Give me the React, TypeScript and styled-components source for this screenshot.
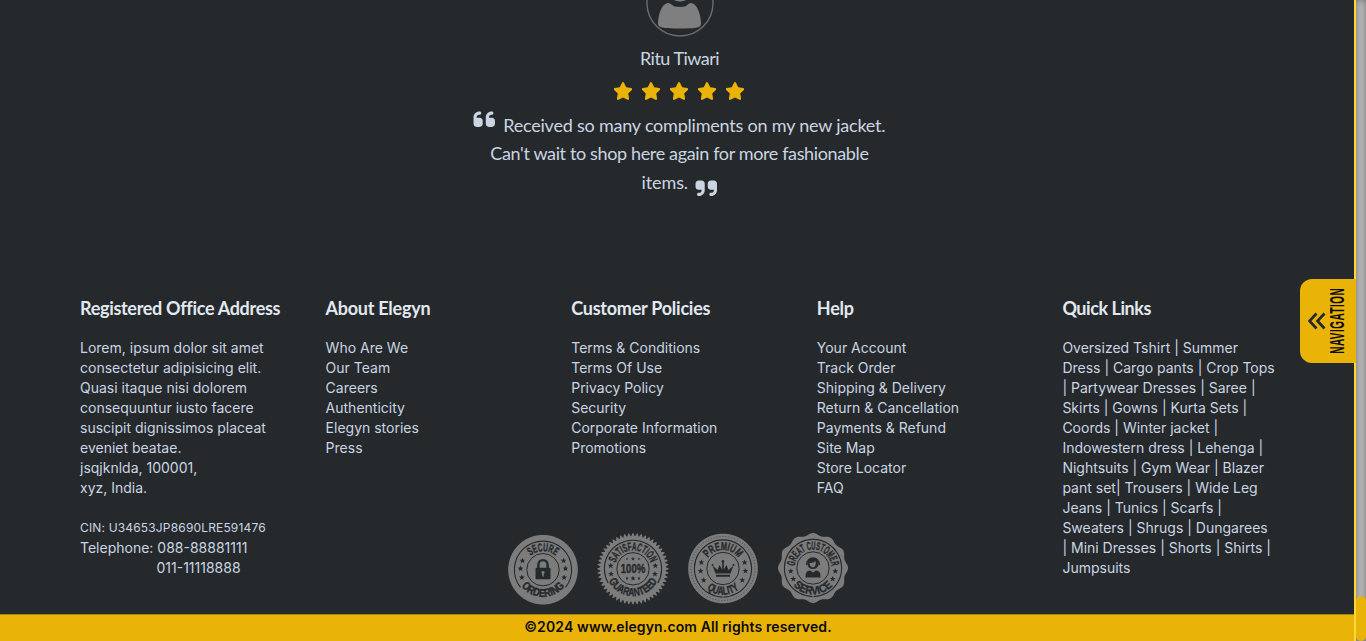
import React, { useId } from "react";
import styled, { createGlobalStyle } from "styled-components";
import { FaStar, FaQuoteLeft, FaQuoteRight } from "react-icons/fa6";

const GlobalStyle = createGlobalStyle`
  * { box-sizing: border-box; }
  html, body { margin: 0; padding: 0; height: 100%; overflow: hidden; }
  body { background: #25292c; color: #cbd5e1; font-family: Inter, "Liberation Sans", sans-serif; }
`;

const Shell = styled.div`
  display: flex;
  height: 641px;
  overflow: hidden;
`;

const Page = styled.main`
  flex: 1;
  display: flex;
  flex-direction: column;
  background: #25292c;
  border-right: 2px solid #fdd835;
`;

const ScrollTrack = styled.div`
  width: 10px;
  background: #b8b8b8;
  box-shadow: inset 0 0 6px rgba(90, 90, 90, 0.75);
  display: flex;
  flex-direction: column;
  justify-content: flex-end;
`;

const ScrollThumb = styled.div`
  height: 45px;
  border-radius: 5px;
  background: #eab308;
`;

const Review = styled.section`
  display: flex;
  flex-direction: column;
  align-items: center;
  height: 298px;
  margin-left: 5px;
  font-family: Lato, "Liberation Sans", sans-serif;
`;

const Avatar = styled.svg`
  display: block;
  width: 68px;
  height: 68px;
  margin-top: -31px;
`;

const Reviewer = styled.div`
  margin-top: 7px;
  font-size: 18px;
  line-height: 28px;
  letter-spacing: -0.52px;
`;

const Stars = styled.div`
  display: flex;
  gap: 8.2px;
  margin: 9px 1px 0 0;
  color: #eab308;
  font-size: 20px;
`;

const Quote = styled.blockquote`
  margin: 10px 0 0;
  text-align: center;
  font-size: 18px;
  line-height: 28.5px;
`;

const QuoteLine = styled.div<{ $tracking: number }>`
  display: flex;
  justify-content: center;
  white-space: nowrap;
  gap: 7.5px;
  height: 28.3px;
  letter-spacing: ${(p) => p.$tracking}px;
`;

const QuoteMark = styled.span<{ $drop: number }>`
  display: flex;
  font-size: 24.5px;
  width: 22px;
  justify-content: center;
  margin-top: ${(p) => p.$drop}px;
  height: 24px;
  svg { flex: none; }
`;

const Footer = styled.footer`
  height: 316px;
  padding: 0 78px 0 80px;
  display: grid;
  grid-template-columns: repeat(5, minmax(0, 1fr));
  grid-template-rows: 236px 70px;
  column-gap: 32px;
`;

const Column = styled.section<{ $tall?: boolean }>`
  grid-row: ${(p) => (p.$tall ? "1 / 3" : "1")};
  font-size: 14px;
  line-height: 20px;
  white-space: nowrap;
`;

const Heading = styled.h2<{ $tracking: number }>`
  margin: -4px 0 16px;
  font: 700 18px/28px Lato, "Liberation Sans", sans-serif;
  color: #e2e8f0;
  letter-spacing: ${(p) => p.$tracking}px;
`;

const Small = styled.div`
  margin-top: 20px;
  font-size: 12px;
  letter-spacing: 0.16px;
`;

const Indented = styled.div`
  padding-left: 76.5px;
`;

const Badges = styled.div`
  grid-column: 2 / 5;
  grid-row: 2;
  display: flex;
  justify-content: center;
  gap: 20px;
`;

const BadgeSvg = styled.svg`
  width: 70px;
  height: 70px;
  display: block;
  overflow: visible;
`;

const Copyright = styled.div`
  flex: 1;
  background: #eab308;
  border-top: 1px solid #a58211;
  color: #0b0b0b;
  font-size: 14px;
  font-weight: 600;
  letter-spacing: 0.13px;
  line-height: 24px;
  text-align: center;
  padding-left: 2px;
`;

const NavTab = styled.button`
  position: absolute;
  left: 1299.5px;
  top: 278.5px;
  width: 56px;
  height: 84px;
  padding: 0 0 0 8.5px;
  border: 0;
  border-radius: 12px 0 0 12px;
  background: #eab308;
  color: #25292c;
  display: flex;
  align-items: center;
`;

const Chevrons = styled.svg`
  width: 18px;
  height: 18px;
  flex: none;
`;

const NavLabel = styled.span`
  writing-mode: vertical-rl;
  width: 20px;
  margin-left: 0.5px;
  color: #0b0b0b;
  font: 700 19.5px/20px "Liberation Sans", sans-serif;
  letter-spacing: 1px;
  flex: none;
  transform: rotate(180deg) scaleY(0.51);
`;

const columns = [
  { title: "About Elegyn", tracking: -0.26, lines: ["Who Are We", "Our Team", "Careers", "Authenticity", "Elegyn stories", "Press"] },
  { title: "Customer Policies", tracking: -0.24, lines: ["Terms & Conditions", "Terms Of Use", "Privacy Policy", "Security", "Corporate Information", "Promotions"] },
  { title: "Help", tracking: -0.2, lines: ["Your Account", "Track Order", "Shipping & Delivery", "Return & Cancellation", "Payments & Refund", "Site Map", "Store Locator", "FAQ"] },
];

const address = ["Lorem, ipsum dolor sit amet", "consectetur adipisicing elit.", "Quasi itaque nisi dolorem", "consequuntur iusto facere", "suscipit dignissimos placeat", "eveniet beatae.", "jsqjknlda, 100001,", "xyz, India."];

const quickLinks = ["Oversized Tshirt | Summer", "Dress | Cargo pants | Crop Tops", "| Partywear Dresses | Saree |", "Skirts | Gowns | Kurta Sets |", "Coords | Winter jacket |", "Indowestern dress | Lehenga |", "Nightsuits | Gym Wear | Blazer", "pant set| Trousers | Wide Leg", "Jeans | Tunics | Scarfs |", "Sweaters | Shrugs | Dungarees", "| Mini Dresses | Shorts | Shirts |", "Jumpsuits"];

const GREY = "#7c7c7c";
const INK = "#25292c";

const starPath = "M0-2.9L.85-.9L2.9-.85L1.25.5L1.85 2.6L0 1.4L-1.85 2.6L-1.25.5L-2.9-.85L-.85-.9Z";

type Edge = "plain" | "teeth" | "dots" | "scallop";

function outline(edge: Edge) {
  const steps = 480;
  const pts: string[] = [];
  for (let i = 0; i < steps; i++) {
    const a = (i / steps) * Math.PI * 2;
    let r = 34.8;
    if (edge === "teeth") r = 34.2 + 1.6 * Math.cos(a * 52);
    if (edge === "scallop") r = 33.8 + 1.2 * Math.cos(a * 12);
    pts.push(`${(35 + r * Math.sin(a)).toFixed(2)},${(35 - r * Math.cos(a)).toFixed(2)}`);
  }
  return pts.join(" ");
}

function ringArc(gapDegrees: number) {
  const r = 28.6;
  const a = (gapDegrees * Math.PI) / 360;
  const dx = r * Math.sin(a);
  const y = 35 + r * Math.cos(a);
  return `M${35 - dx} ${y}A${r} ${r} 0 1 1 ${35 + dx} ${y}`;
}

interface BadgeProps {
  top: string;
  bottom: string;
  topLength: number;
  bottomLength: number;
  bottomRadius: number;
  gap: number;
  shift: number;
  edge: Edge;
  starAngles: number[];
  children: React.ReactNode;
}

function Badge({ top, bottom, topLength, bottomLength, bottomRadius: br, gap, shift, edge, starAngles, children }: BadgeProps) {
  const id = useId();
  const font = { fontFamily: '"Liberation Sans", sans-serif', fontWeight: 700, fontSize: 11.4, fill: INK, stroke: INK, strokeWidth: 0.4 };
  return (
    <BadgeSvg viewBox="0 0 70 70">
      <g transform={`translate(0 ${shift})`}>
        <polygon points={outline(edge)} fill={GREY} />
        {edge === "dots" && <circle cx="35" cy="35" r="32" fill="none" stroke={INK} strokeWidth="0.9" strokeDasharray="1 2" opacity="0.75" />}
        <path d={ringArc(gap)} fill="none" stroke={INK} strokeWidth="1.1" />
        <circle cx="35" cy="35" r="16.2" fill="none" stroke={INK} strokeWidth="1" />
        <path id={`${id}t`} d="M16.500 35A18.500 18.500 0 1 1 53.500 35" fill="none" />
        <path id={`${id}b`} d={`M${35 - br} 35A${br} ${br} 0 0 0 ${35 + br} 35`} fill="none" />
        <text {...font} textAnchor="middle" textLength={topLength} lengthAdjust="spacingAndGlyphs">
          <textPath href={`#${id}t`} startOffset="50%" textLength={topLength} lengthAdjust="spacingAndGlyphs">{top}</textPath>
        </text>
        <text {...font} textAnchor="middle" textLength={bottomLength} lengthAdjust="spacingAndGlyphs">
          <textPath href={`#${id}b`} startOffset="50%" textLength={bottomLength} lengthAdjust="spacingAndGlyphs">{bottom}</textPath>
        </text>
        {starAngles.flatMap((a) => [a, 180 - a]).map((a) => (
          <path key={a} d={starPath} fill={INK} transform={`translate(${35 + 22.5 * Math.cos((a * Math.PI) / 180)} ${35 + 22.5 * Math.sin((a * Math.PI) / 180)})`} />
        ))}
        {children}
      </g>
    </BadgeSvg>
  );
}

export default function App() {
  return (
    <>
      <GlobalStyle />
      <Shell>
        <Page>
          <Review>
            <Avatar viewBox="0 0 68 68">
              <circle cx="34" cy="34" r="33" fill="none" stroke="#6b6b6b" strokeWidth="1.4" />
              <circle cx="34" cy="19" r="13.5" fill="#7f7f7f" />
              <path d="M22 34C15 35 12 47 12 55C12 59 20 59.500 34 59.500S55 59 55 55C55 47 52 35 45 34C41 34 43 38 34 38S26 34 22 34Z" fill="#7f7f7f" />
            </Avatar>
            <Reviewer>Ritu Tiwari</Reviewer>
            <Stars>{[0, 1, 2, 3, 4].map((n) => <FaStar key={n} />)}</Stars>
            <Quote>
              <QuoteLine $tracking={-0.21}>
                <QuoteMark $drop={-4}><FaQuoteLeft /></QuoteMark>
                Received so many compliments on my new jacket.
              </QuoteLine>
              <QuoteLine $tracking={-0.36}>Can't wait to shop here again for more fashionable</QuoteLine>
              <QuoteLine $tracking={-0.1}>
                items.
                <QuoteMark $drop={8}><FaQuoteRight /></QuoteMark>
              </QuoteLine>
            </Quote>
          </Review>
          <Footer>
            <Column $tall>
              <Heading $tracking={-0.31}>Registered Office Address</Heading>
              {address.map((l) => <div key={l}>{l}</div>)}
              <Small>CIN: U34653JP8690LRE591476</Small>
              <div>Telephone: 088-88881111</div>
              <Indented>011-11118888</Indented>
            </Column>
            {columns.map((c) => (
              <Column key={c.title}>
                <Heading $tracking={c.tracking}>{c.title}</Heading>
                {c.lines.map((l) => <div key={l}>{l}</div>)}
              </Column>
            ))}
            <Column $tall>
              <Heading $tracking={-0.45}>Quick Links</Heading>
              {quickLinks.map((l) => <div key={l}>{l}</div>)}
            </Column>
            <Badges>
              <Badge top="SECURE" bottom="ORDERING" topLength={27} bottomLength={50} bottomRadius={27.2} gap={104} shift={0.7} edge="plain" starAngles={[-24, -3, 20]}>
                <path d="M30.400 35V30a4.600 4.600 0 0 1 9.200 0V35" fill="none" stroke={INK} strokeWidth="2.4" />
                <rect x="27.5" y="33" width="15" height="11.5" rx="1" fill={INK} />
                <path d="M35 36.200a1.600 1.600 0 0 1 .8 3v2.600h-1.600v-2.600a1.600 1.600 0 0 1 .8-3Z" fill={GREY} />
              </Badge>
              <Badge top="SATISFACTION" bottom="GUARANTEED" topLength={46} bottomLength={60} bottomRadius={27.2} gap={120} shift={-0.2} edge="teeth" starAngles={[-8, 13]}>
                <text x="35" y="39.2" textAnchor="middle" fontFamily='"Liberation Sans", sans-serif' fontWeight="700" fontSize="12.5" textLength="24.5" lengthAdjust="spacingAndGlyphs" fill={INK} stroke={INK} strokeWidth="0.4">100%</text>
                {[-6, 0, 6].map((x) => (
                  <g key={x} fill={INK}>
                    <path d={starPath} transform={`translate(${35 + x} 25) scale(${x ? 0.45 : 0.7})`} />
                    <path d={starPath} transform={`translate(${35 + x} 44.5) scale(${x ? 0.6 : 0.9})`} />
                  </g>
                ))}
              </Badge>
              <Badge top="PREMIUM" bottom="QUALITY" topLength={35} bottomLength={35} bottomRadius={26.2} gap={2} shift={-0.5} edge="dots" starAngles={[-16, 6, 31]}>
                <path d="M24.500 32L29.500 36.500L31.500 31.500L34.200 36V28H35.800V36L38.500 31.500L40.500 36.500L45.500 32L42.500 40H27.500ZM28 41.300H42V43.300H28Z" fill={INK} />
                <circle cx="35" cy="27.8" r="1.3" fill={INK} />
                <circle cx="24.5" cy="31.5" r="1" fill={INK} />
                <circle cx="45.5" cy="31.5" r="1" fill={INK} />
              </Badge>
              <Badge top="GREAT CUSTOMER" bottom="SERVICE" topLength={54} bottomLength={44} bottomRadius={26.4} gap={2} shift={-1} edge="scallop" starAngles={[8, 29]}>
                <circle cx="35" cy="30.5" r="5.6" fill={INK} />
                <path d="M28.600 32a6.400 7 0 0 1 12.800 0" fill="none" stroke={INK} strokeWidth="1.5" />
                <path d="M31.500 30q4 .5 6-2q1 4-1.500 6.300h-2q-2.400-1-2.500-4.300Z" fill={GREY} />
                <path d="M27.500 44.500Q27 37.500 32 37.500L35 39.500L38 37.500Q43 37.500 42.500 44.500Z" fill={INK} />
              </Badge>
            </Badges>
          </Footer>
          <Copyright>©2024 www.elegyn.com All rights reserved.</Copyright>
        </Page>
        <ScrollTrack><ScrollThumb /></ScrollTrack>
      </Shell>
      <NavTab>
        <Chevrons viewBox="0 0 18 18" fill="none" stroke="currentColor" strokeWidth="2.700">
          <path d="M8.500 1.500L1.500 9L8.500 16.500M16.500 1.500L9.500 9L16.500 16.500" />
        </Chevrons>
        <NavLabel>NAVIGATION</NavLabel>
      </NavTab>
    </>
  );
}
